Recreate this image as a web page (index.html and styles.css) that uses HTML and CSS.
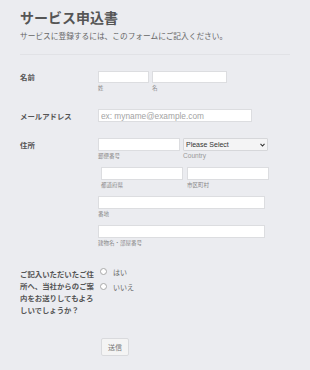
FILE: index.html
```html
<!doctype html>
<html lang="ja">
  <head>
    <meta charset="UTF-8" />
    <meta name="viewport" content="width=device-width, initial-scale=1" />
    <title>サービス申込書</title>
    <link rel="stylesheet" href="styles.css">
  </head>
  <body>
    <div class="page">
      <h1>サービス申込書</h1>
      <p class="lead">サービスに登録するには、このフォームにご記入ください。</p>
      <hr />

      <!-- 名前 -->
      <div class="row row-name">
        <div class="label">名前</div>
        <div class="fields pair">
          <div class="field">
            <input type="text" class="w-first" />
            <span class="sub">姓</span>
          </div>
          <div class="field">
            <input type="text" class="w-last" />
            <span class="sub">名</span>
          </div>
        </div>
      </div>

      <!-- メール -->
      <div class="row row-mail">
        <div class="label tall">メールアドレス</div>
        <div class="fields">
          <input type="text" class="w-mail" placeholder="ex: myname@example.com" />
        </div>
      </div>

      <!-- 住所 -->
      <div class="row row-addr">
        <div class="label tall">住所</div>
        <div class="fields">
          <div class="pair">
            <div class="field">
              <input type="text" class="w-half tall" />
              <span class="sub">郵便番号</span>
            </div>
            <div class="field">
              <div class="select-wrap">
                <select>
                  <option>Please Select</option>
                </select>
                <svg class="chev" width="5" height="4" viewBox="0 0 5 4"><path d="M0.5 0.8 L2.5 3 L4.5 0.8" fill="none" stroke="#333" stroke-width="1.1"/></svg>
              </div>
              <span class="sub latin">Country</span>
            </div>
          </div>
          <div class="pair shifted">
            <div class="field">
              <input type="text" class="w-half tall" />
              <span class="sub">都道府県</span>
            </div>
            <div class="field">
              <input type="text" class="w-half tall" />
              <span class="sub">市区町村</span>
            </div>
          </div>
          <div class="field block">
            <input type="text" class="w-full tall" />
            <span class="sub">番地</span>
          </div>
          <div class="field block">
            <input type="text" class="w-full tall" />
            <span class="sub">建物名・部屋番号</span>
          </div>
        </div>
      </div>

      <!-- ご案内 -->
      <div class="row row-radio">
        <div class="label wrap">ご記入いただいたご住所へ、当社からのご案内をお送りしてもよろしいでしょうか？</div>
        <div class="options">
          <label class="opt"><span class="radio"></span>はい</label>
          <label class="opt"><span class="radio"></span>いいえ</label>
        </div>
      </div>

      <button type="button" class="submit">送信</button>
    </div>
  </body>
</html>
```

FILE: styles.css
```css
body {
  margin: 0;
  background: #ebecf0;
  font-family: "Noto Sans CJK JP", "Liberation Sans", sans-serif;
  color: #555;
}
.page {
  padding: 8px 20px 0;
}
h1 {
  margin: 0;
  font-size: 14px;
  line-height: 18px;
  font-weight: bold;
  color: #555;
}
.lead {
  margin: 5px 0 0;
  font-size: 7.7px;
  line-height: 10px;
  color: #666;
}
hr {
  margin: 13px 0 0;
  border: none;
  border-top: 1px solid #e1e2e6;
}
.row {
  display: flex;
}
.row-name {
  margin-top: 16px;
}
.row-mail {
  margin-top: 17px;
}
.row-addr {
  margin-top: 16px;
}
.row-radio {
  margin-top: 21px;
}
.label {
  width: 78px;
  flex: none;
  font-size: 7.4px;
  font-weight: bold;
  line-height: 12px;
  color: #555;
}
.label.tall {
  line-height: 13px;
}
.label.wrap {
  width: 76px;
  margin-right: 2px;
  line-height: 12px;
}
.fields {
  display: flex;
  flex-direction: column;
  align-items: flex-start;
}
.fields.pair {
  flex-direction: row;
}
.pair {
  display: flex;
  gap: 3px;
}
.pair.shifted {
  margin-left: 3px;
  gap: 4px;
}
.field {
  display: flex;
  flex-direction: column;
  align-items: flex-start;
}
.field.block {
  margin-top: 7px;
}
.pair + .pair {
  margin-top: 7px;
}
input[type="text"] {
  display: block;
  box-sizing: border-box;
  height: 12px;
  margin: 0;
  padding: 0 2px;
  border: 1px solid #dcdde0;
  background: #fff;
  font-family: "Liberation Sans", sans-serif;
  font-size: 8.3px;
  outline: none;
}
input.tall {
  height: 13px;
}
input::placeholder {
  color: #a3a3a3;
}
.w-first {
  width: 51px;
}
.w-last {
  width: 75px;
}
.w-mail {
  width: 154px;
  height: 13px !important;
}
.w-half {
  width: 82px;
}
.w-full {
  width: 167px;
}
.sub {
  margin-top: 1px;
  font-size: 5.5px;
  line-height: 8px;
  color: #888;
}
.row-name .sub {
  margin-top: 1px;
}
.sub.latin {
  font-family: "Liberation Sans", sans-serif;
  font-size: 6.6px;
  color: #999;
}
.select-wrap {
  position: relative;
  display: flex;
}
select {
  appearance: none;
  box-sizing: border-box;
  width: 85px;
  height: 13px;
  margin: 0;
  padding: 0 2px;
  border: 1px solid #d6d7da;
  border-radius: 1px;
  background: #f4f4f5;
  font-family: "Liberation Sans", sans-serif;
  font-size: 7px;
  color: #333;
}
.chev {
  position: absolute;
  right: 3px;
  top: 5px;
}
.options {
  display: flex;
  flex-direction: column;
  margin-top: -4px;
  margin-left: 2px;
}
.opt {
  display: flex;
  align-items: center;
  height: 15px;
  font-size: 7px;
  color: #666;
}
.radio {
  box-sizing: border-box;
  width: 7px;
  height: 7px;
  margin-right: 6px;
  border: 1px solid #a9a9a9;
  border-radius: 50%;
  background: #fff;
}
.submit {
  display: block;
  margin: 22px 0 0 81px;
  width: 28px;
  height: 18px;
  padding: 0;
  border: 1px solid #d9dadd;
  border-radius: 2px;
  background: #f4f4f4;
  font-family: "Noto Sans CJK JP", sans-serif;
  font-size: 7px;
  color: #777;
}
```
